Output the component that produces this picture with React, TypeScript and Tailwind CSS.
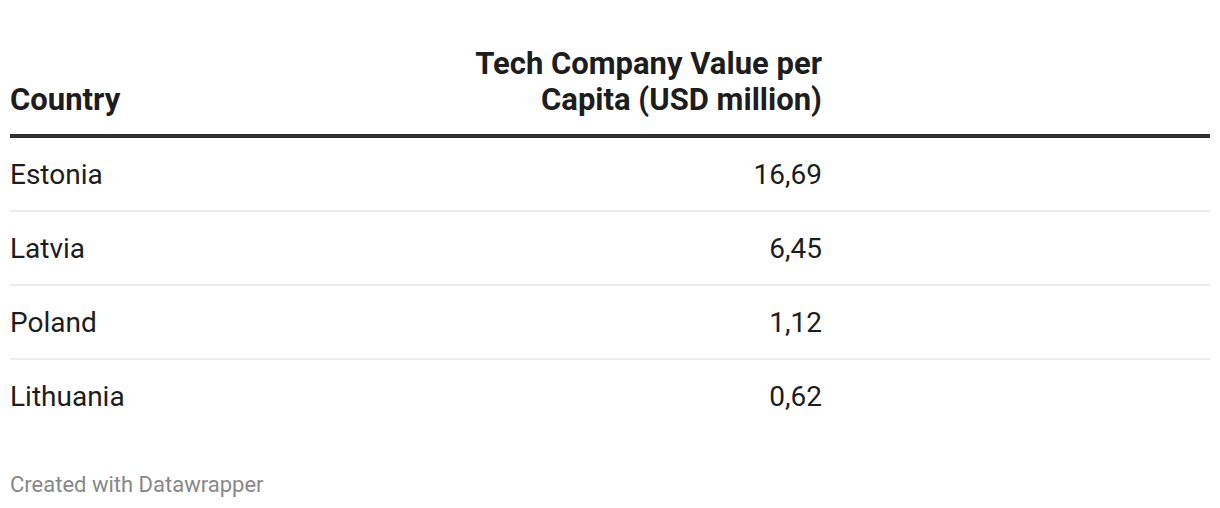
import React from 'react';

const rows = [
  { country: 'Estonia', value: '16,69' },
  { country: 'Latvia', value: '6,45' },
  { country: 'Poland', value: '1,12' },
  { country: 'Lithuania', value: '0,62' },
];

const App: React.FC = () => {
  return (
    <div
      className="w-[1220px] h-[508px] bg-white px-[10px] pt-[46px] text-[#1d1d1d]"
      style={{ fontFamily: 'Roboto, "Liberation Sans", sans-serif' }}
    >
      <div className="grid grid-cols-[420px_392px_1fr] border-b-4 border-[#333333] pb-[16px] text-[31px] leading-[36px] font-bold">
        <div className="self-end">Country</div>
        <div className="text-right">
          Tech Company Value per
          <br />
          Capita (USD million)
        </div>
        <div />
      </div>

      {rows.map((r, i) => (
        <div
          key={r.country}
          className={
            i < rows.length - 1
              ? 'grid grid-cols-[420px_392px_1fr] h-[74px] pt-[2px] items-center border-b-2 border-[#ececec] text-[28px]'
              : 'grid grid-cols-[420px_392px_1fr] h-[72px] pt-[2px] items-center text-[28px]'
          }
        >
          <div>{r.country}</div>
          <div className="text-right">{r.value}</div>
          <div />
        </div>
      ))}

      <div className="mt-[39px] text-[22px] leading-[28px] text-[#888888]">Created with Datawrapper</div>
    </div>
  );
};

export default App;
